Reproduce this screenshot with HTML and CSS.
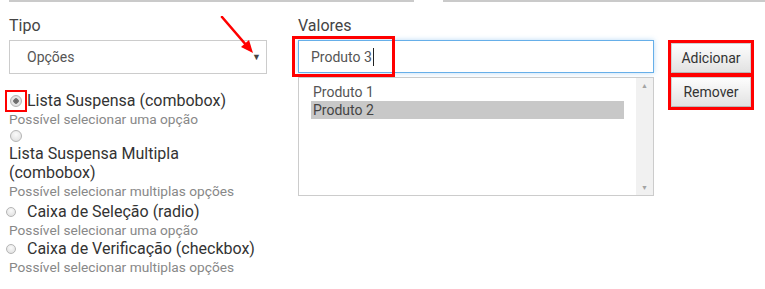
FILE: index.html
```html
<!DOCTYPE html>
<html>
	<head>
		<meta charset="UTF-8">
		<title>Tipo e Valores</title>
		<link rel="stylesheet" href="styles.css">
	</head>
	<body>
		<div class="rules">
			<div class="rule rule-left"></div>
			<div class="rule rule-right"></div>
		</div>
		<section class="form">
			<div class="col-tipo">
				<div class="label">Tipo</div>
				<div class="select">
					<span>Opções</span>
					<span class="caret">&#9660;</span>
				</div>
				<div class="opts">
					<div class="opt"><span class="mark"><span class="radio big checked"></span></span>Lista Suspensa (combobox)</div>
					<div class="desc">Possível selecionar uma opção</div>
					<div class="opt radio-row"><span class="radio big"></span></div>
					<div class="opt">Lista Suspensa Multipla<br>(combobox)</div>
					<div class="desc">Possível selecionar multiplas opções</div>
					<div class="opt spaced"><span class="radio small"></span>Caixa de Seleção (radio)</div>
					<div class="desc">Possível selecionar uma opção</div>
					<div class="opt"><span class="radio small"></span>Caixa de Verificação (checkbox)</div>
					<div class="desc">Possível selecionar multiplas opções</div>
				</div>
			</div>
			<div class="col-valores">
				<div class="label">Valores</div>
				<div class="input">
					<span>Produto 3</span><span class="cursor"></span>
					<span class="hl-input"></span>
				</div>
				<div class="listbox">
					<ul class="items">
						<li>Produto 1</li>
						<li class="sel">Produto 2</li>
					</ul>
					<div class="scroll">
						<span>&#9650;</span>
						<span>&#9660;</span>
					</div>
				</div>
			</div>
			<div class="col-botoes">
				<div class="hl-btn"><button class="btn">Adicionar</button></div>
				<div class="hl-btn"><button class="btn">Remover</button></div>
			</div>
		</section>
		<svg class="pointer" width="50" height="50" viewBox="0 0 50 50">
			<line x1="6" y1="1" x2="31" y2="30" stroke="#f00" stroke-width="2.6" stroke-linecap="round"/>
			<polygon points="37,37 25,31 33,24" fill="#f00"/>
		</svg>
	</body>
</html>
```

FILE: styles.css
```css
body{
	margin: 0;
	background: #fff;
	font-family: Roboto, "Liberation Sans", sans-serif;
	color: #333;
	position: relative;
	height: 289px;
	overflow: hidden;
}
.rules{
	display: flex;
	padding-left: 9px;
}
.rule{
	height: 2px;
	background: #cacaca;
}
.rule-left{
	width: 405px;
}
.rule-right{
	margin-left: 29px;
	flex: 1;
}
.form{
	display: flex;
	padding: 14px 0 0 9px;
}
.label{
	font-size: 16px;
	line-height: 20px;
	color: #444;
	margin-bottom: 4px;
}
.col-tipo{
	width: 258px;
}
.select{
	height: 32px;
	border: 1px solid #ccc;
	display: flex;
	align-items: center;
	justify-content: space-between;
	padding: 0 5px 0 17px;
	font-size: 14px;
	color: #555;
}
.caret{
	font-size: 9px;
	color: #444;
	margin-top: -1px;
}
.opts{
	margin-top: 17px;
}
.opt{
	font-size: 16px;
	line-height: 19px;
	color: #333;
	display: flex;
	align-items: center;
	flex-wrap: wrap;
}
.opt br{
	flex-basis: 100%;
}
.opt.radio-row{
	height: 16px;
	line-height: 16px;
}
.opt.spaced{
	margin-top: 2px;
}
.desc{
	font-size: 13.7px;
	line-height: 18px;
	color: #888;
}
.mark{
	display: inline-flex;
	align-items: center;
	justify-content: center;
	width: 18px;
	height: 18px;
	margin: -2px 0 -2px -4px;
	border: 2px solid #f00;
}
.radio{
	display: inline-block;
	box-sizing: border-box;
	border-radius: 50%;
	border: 1px solid #b5b5b5;
	background: radial-gradient(circle at 50% 35%, #fafafa, #dcdcdc);
}
.radio.big{
	width: 12px;
	height: 12px;
	margin-left: 1px;
}
.mark .radio.big{
	margin-left: 0;
}
.radio.small{
	width: 10px;
	height: 10px;
	margin: 0 11px 0 -3px;
}
.radio.checked{
	background: radial-gradient(circle, #666 0, #777 2.5px, #e8e8e8 3px, #d8d8d8 100%);
}
.col-valores{
	width: 356px;
	margin-left: 31px;
}
.input{
	position: relative;
	height: 31px;
	border: 1px solid #66afe9;
	box-shadow: 0 0 5px rgba(102,175,233,.45);
	display: flex;
	align-items: center;
	padding-left: 12px;
	font-size: 14px;
	color: #555;
}
.cursor{
	display: inline-block;
	width: 1px;
	height: 18px;
	background: #222;
	margin-left: 1px;
}
.hl-input{
	position: absolute;
	left: -7px;
	top: -5px;
	width: 97px;
	height: 35px;
	border: 3px solid #f00;
}
.listbox{
	margin-top: 4px;
	height: 117px;
	border: 1px solid #ccc;
	display: flex;
}
.items{
	list-style: none;
	margin: 0;
	padding: 5px 12px 0 12px;
	flex: 1;
	font-size: 14px;
	color: #555;
}
.items li{
	height: 18px;
	line-height: 18px;
	padding-left: 2px;
}
.items .sel{
	background: #c8c8c8;
	color: #444;
}
.scroll{
	width: 17px;
	background: #f1f1f1;
	display: flex;
	flex-direction: column;
	justify-content: space-between;
	align-items: center;
	padding: 4px 0 3px;
	font-size: 7px;
	color: #a3a3a3;
}
.col-botoes{
	margin: 24px 0 0 14px;
}
.hl-btn{
	width: 80px;
	height: 30px;
	border: 3px solid #f00;
}
.hl-btn + .hl-btn{
	margin-top: -2px;
}
.btn{
	width: 100%;
	height: 100%;
	border: 1px solid #d0d0d0;
	border-bottom-color: #b8b8b8;
	background: linear-gradient(#fdfdfd, #e2e2e2);
	font-family: Roboto, "Liberation Sans", sans-serif;
	font-size: 14px;
	color: #333;
	padding: 0;
}
.pointer{
	position: absolute;
	left: 216px;
	top: 16px;
}
```
